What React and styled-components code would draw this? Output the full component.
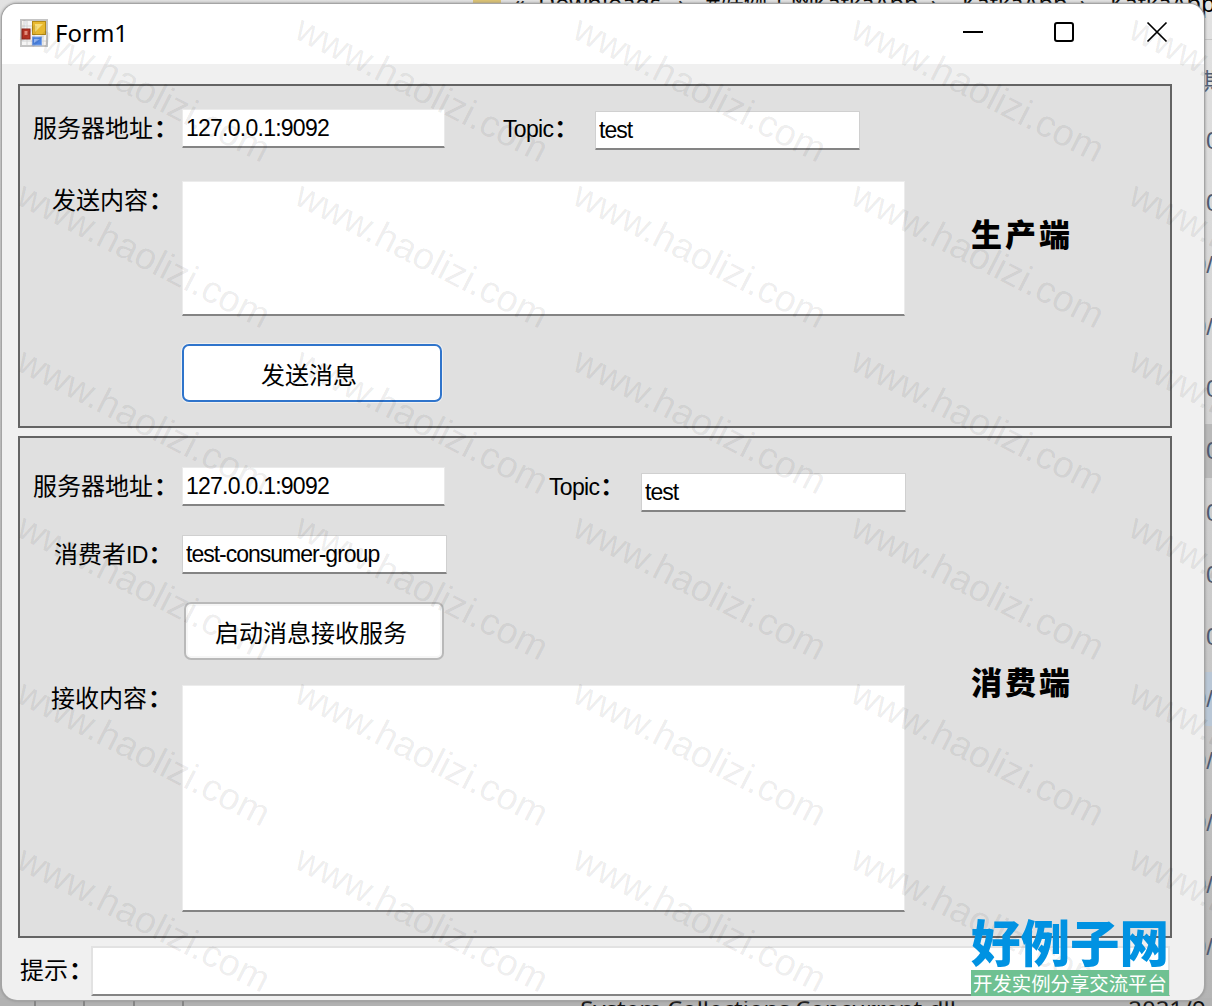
import React, { useState } from 'react';
import styled, { createGlobalStyle } from 'styled-components';

const GlobalStyle = createGlobalStyle`
  * {
    box-sizing: border-box;
  }

  body {
    margin: 0;
    font-family: "Liberation Sans", "Noto Sans CJK SC", sans-serif;
    color: #000;
  }
`;

const Desktop = styled.div`
  position: relative;
  width: 1212px;
  height: 1006px;
  padding: 4px 8px 6px 2px;
  overflow: hidden;
  background: linear-gradient(#e2e2e2, #cbcbcb 60%, #b4b4b4);
`;

/* explorer window that peeks out behind the form */
const Explorer = styled.div`
  position: absolute;
  inset: 0;
  display: flex;
  flex-direction: column;
  justify-content: space-between;
`;

const PathBar = styled.div`
  display: flex;
  height: 40px;
  padding-left: 473px;
  border-bottom: 1px solid #c4c4c4;
  font-family: "Noto Sans", "Noto Sans CJK SC", sans-serif;
  font-size: 23.5px;
  line-height: 30px;
  white-space: pre;
`;

const Folder = styled.span`
  width: 28px;
  height: 5px;
  flex: none;
  margin-right: 12px;
  background: #dcc271;
`;

const PathText = styled.span`
  width: ${({ width }) => width}px;
  flex: none;
  margin-top: -12px;
`;

const Dates = styled.div`
  position: absolute;
  top: 52px;
  right: 0;
  width: 9px;
  overflow: hidden;
  color: #4e5a70;
  font-size: 24px;
`;

const DateRow = styled.div`
  display: flex;
  align-items: center;
  height: 54px;
  margin-bottom: 8px;
  padding-left: 3px;
  background: ${({ fill }) => fill || 'transparent'};
  text-indent: ${({ shift }) => shift || 0}px;
`;

const FileRow = styled.div`
  display: flex;
  height: 8px;
  padding-left: 34px;
  background: #b2b2b2;
  color: #111;
  font-family: "Noto Sans", sans-serif;
  font-size: 24px;
  line-height: 22px;
  white-space: pre;
`;

const Guide = styled.span`
  width: 49.3px;
  border-left: 2px solid #858585;
`;

const FileName = styled.span`
  width: 548px;
  margin-left: 349px;
`;

const Window = styled.main`
  position: relative;
  display: flex;
  flex-direction: column;
  width: 1202px;
  height: 996px;
  overflow: hidden;
  background: #f0f0f0;
  border-radius: 15px;
  box-shadow: 0 0 0 1px #a5a5a5, 0 0 3px 1px #8c8c8c;
`;

const TitleBar = styled.header`
  display: flex;
  align-items: center;
  height: 60px;
  flex: none;
  padding: 0 36px 3px 18px;
  background: #fff;
`;

const Title = styled.h1`
  flex: 1;
  margin: 0 0 0 7px;
  font-family: "Noto Sans", sans-serif;
  font-size: 24px;
  font-weight: 400;
  line-height: 30px;
`;

const Controls = styled.div`
  display: flex;
  gap: 71px;
`;

const Panel = styled.section`
  display: flex;
  height: ${({ height }) => height}px;
  flex: none;
  margin: ${({ gap }) => gap}px 32px 0 16px;
  background: #e0e0e0;
  border: 2px solid #646464;
`;

const Fields = styled.div`
  width: 951px;
  flex: none;
`;

const Row = styled.div`
  display: flex;
  align-items: flex-start;
  margin-top: ${({ gap }) => gap}px;
`;

const Label = styled.label`
  width: ${({ width }) => width}px;
  flex: none;
  padding-left: ${({ indent }) => indent || 0}px;
  margin-top: ${({ drop = 2 }) => drop}px;
  font-size: 24px;
  line-height: 36px;
  white-space: nowrap;
`;

const Colon = styled.span`
  margin-left: 1px;
  font-weight: 700;
`;

const Latin = styled.span`
  letter-spacing: -0.7px;
  font-size: 23px;
`;

const TextInput = styled.input`
  width: ${({ $wide }) => ($wide ? 265 : 263)}px;
  height: 39px;
  flex: none;
  margin: ${({ $drop }) => $drop || 0}px 0 0;
  padding: 1px 0 0 3px;
  background: #fff;
  border: 1px solid ${({ $wide }) => ($wide ? '#d0d0d0' : '#eaeaea')};
  border-bottom: 2px solid #848484;
  border-radius: 1px;
  font-family: "Liberation Sans", sans-serif;
  font-size: 23px;
  letter-spacing: ${({ $tight }) => $tight || -1}px;
  outline: none;
`;

const TextArea = styled.textarea`
  display: block;
  width: 723px;
  height: ${({ $height }) => $height}px;
  flex: none;
  margin: 0;
  padding: 4px;
  background: #fff;
  border: 1px solid #ececec;
  border-bottom: 2px solid #848484;
  font-size: 24px;
  resize: none;
  outline: none;
`;

const Button = styled.button`
  width: 260px;
  height: 58px;
  margin: 0 0 0 ${({ $indent }) => $indent}px;
  padding: 0 6px 0 0;
  background: #fff;
  border: 2px solid ${({ $primary }) => ($primary ? '#2f74cb' : '#b9b9b9')};
  border-radius: 7px;
  box-shadow: ${({ $primary }) => ($primary ? '0 0 0 1px #f0f0f0' : 'inset 0 0 0 2px #f6f6f6')};
  color: #000;
  font-family: "Noto Sans CJK SC", sans-serif;
  font-size: 24px;
`;

const Role = styled.h2`
  margin: ${({ top }) => top}px 0 0;
  font-family: "Noto Sans CJK SC", sans-serif;
  font-size: 31px;
  font-weight: 900;
  line-height: 40px;
  letter-spacing: 3px;
  white-space: nowrap;
`;

const Hint = styled.footer`
  display: flex;
  margin: 8px 34px 0 18px;
`;

const HintBox = styled.output`
  flex: 1;
  height: 50px;
  background: #fff;
  border: 2px solid #e2e2e2;
  border-bottom-color: #848484;
`;

const Watermark = styled.div`
  position: absolute;
  top: 17px;
  left: 15px;
  display: grid;
  grid-template-columns: repeat(5, 278px);
  grid-auto-rows: 166px;
  pointer-events: none;
`;

const Mark = styled.span`
  width: 0;
  height: 0;
  color: rgba(0, 0, 0, 0.08);
  font-size: 37.6px;
  line-height: 34px;
  white-space: nowrap;
  transform: translate(13px, -6.5px) rotate(27deg);
  transform-origin: 0 0;
`;

const Brand = styled.div`
  position: absolute;
  left: 971px;
  top: 916px;
  width: 198px;
  font-family: "Noto Sans CJK SC", sans-serif;
  white-space: nowrap;
`;

const BrandName = styled.div`
  height: 54px;
  color: #0092e2;
  font-size: 49.5px;
  font-weight: 900;
  line-height: 50px;
`;

const BrandSlogan = styled.div`
  height: 26px;
  padding-left: 2px;
  background: #6fc192;
  color: #fff;
  font-size: 19.4px;
  line-height: 25px;
`;

const dates = [
  { text: '期', shift: -3 },
  { text: '0' },
  { text: '0' },
  { text: '0/', shift: -13 },
  { text: '0/', shift: -13 },
  { text: '0' },
  { text: '0', fill: '#b9b9b9' },
  { text: '0' },
  { text: '0' },
  { text: '0' },
  { text: '0/', shift: -13, fill: '#b9c7d6' },
  { text: '0/', shift: -13 },
  { text: '0/', shift: -13 },
  { text: '0/', shift: -13 },
  { text: '0/', shift: -13 },
];

function FormIcon() {
  return (
    <svg width="28" height="28" viewBox="0 0 28 28">
      <rect x="1" y="1" width="26" height="26" fill="#f5f5f5" stroke="#c5c5c5" strokeWidth="2" />
      <path d="M7 2v24M2 7h10M2 22h24M23 17v9" stroke="#d4d4d4" />
      <rect x="2" y="10" width="8" height="10" fill="#b93424" stroke="#8d2418" />
      <rect x="4.500" y="12" width="3" height="4" fill="#e38d7b" />
      <rect x="12.500" y="2.500" width="13" height="13" fill="#e8b930" stroke="#b48a18" />
      <path d="M15 5h8l-8 8z" fill="#f8dd78" />
      <rect x="12.500" y="18" width="9" height="8" fill="#4b83e0" stroke="#7da4e8" />
      <path d="M14 20h6l-6 4z" fill="#8fb4f3" />
    </svg>
  );
}

function ControlIcon({ path }) {
  return (
    <svg width="22" height="22" viewBox="0 0 22 22" fill="none" stroke="#000" strokeWidth="2" overflow="visible">
      {path}
    </svg>
  );
}

function App() {
  const [producer, setProducer] = useState({ server: '127.0.0.1:9092', topic: 'test', content: '' });
  const [consumer, setConsumer] = useState({ server: '127.0.0.1:9092', topic: 'test', group: 'test-consumer-group' });

  function changeProducer(e) {
    setProducer({ ...producer, [e.target.name]: e.target.value });
  }

  function changeConsumer(e) {
    setConsumer({ ...consumer, [e.target.name]: e.target.value });
  }

  return (
    <Desktop>
      <GlobalStyle />
      <Explorer>
        <PathBar>
          <Folder />
          <PathText width={25}>«</PathText>
          <PathText width={140}>Downloads</PathText>
          <PathText width={27}>›</PathText>
          <PathText width={108}>#好例子网</PathText>
          <PathText width={149}>KafkaApp  ›</PathText>
          <PathText width={148}>KafkaApp  ›</PathText>
          <PathText width={120}>KafkaApp</PathText>
        </PathBar>
        <Dates>
          {dates.map((row, i) => (
            <DateRow key={i} shift={row.shift} fill={row.fill}>{row.text}</DateRow>
          ))}
        </Dates>
        <FileRow>
          <Guide />
          <Guide />
          <Guide />
          <Guide />
          <FileName>System.Collections.Concurrent.dll</FileName>
          <span>2021/9</span>
        </FileRow>
      </Explorer>

      <Window>
        <TitleBar>
          <FormIcon />
          <Title>Form1</Title>
          <Controls>
            <ControlIcon path={<path d="M3 10h20" />} />
            <ControlIcon path={<rect x="2" y="1" width="18" height="18" rx="2" />} />
            <ControlIcon path={<path d="M1.500 0.500l19 19M20.500 0.500l-19 19" strokeWidth="1.700" />} />
          </Controls>
        </TitleBar>

        <Panel height={344} gap={20}>
          <Fields>
            <Row gap={23}>
              <Label width={162} indent={13}>服务器地址<Colon>：</Colon></Label>
              <TextInput name="server" value={producer.server} onChange={changeProducer} $tight={-0.75} />
              <Label width={150} indent={58}><Latin>Topic</Latin><Colon>：</Colon></Label>
              <TextInput name="topic" value={producer.topic} onChange={changeProducer} $wide $drop={2} />
            </Row>
            <Row gap={31}>
              <Label width={162} indent={32}>发送内容<Colon>：</Colon></Label>
              <TextArea name="content" value={producer.content} onChange={changeProducer} $height={135} />
            </Row>
            <Row gap={28}>
              <Button $indent={162} $primary>发送消息</Button>
            </Row>
          </Fields>
          <Role top={127}>生产端</Role>
        </Panel>

        <Panel height={502} gap={8}>
          <Fields>
            <Row gap={29}>
              <Label width={162} indent={13}>服务器地址<Colon>：</Colon></Label>
              <TextInput name="server" value={consumer.server} onChange={changeConsumer} $tight={-0.75} />
              <Label width={196} indent={104}><Latin>Topic</Latin><Colon>：</Colon></Label>
              <TextInput name="topic" value={consumer.topic} onChange={changeConsumer} $wide $drop={6} />
            </Row>
            <Row gap={23}>
              <Label width={162} indent={34}>消费者<Latin>ID</Latin><Colon>：</Colon></Label>
              <TextInput name="group" value={consumer.group} onChange={changeConsumer} $wide />
            </Row>
            <Row gap={28}>
              <Button $indent={164}>启动消息接收服务</Button>
            </Row>
            <Row gap={25}>
              <Label width={162} indent={31} drop={-4}>接收内容<Colon>：</Colon></Label>
              <TextArea readOnly $height={227} />
            </Row>
          </Fields>
          <Role top={223}>消费端</Role>
        </Panel>

        <Hint>
          <Label width={71} drop={7}>提示<Colon>：</Colon></Label>
          <HintBox />
        </Hint>
      </Window>

      <Watermark>
        {Array.from({ length: 30 }, (_, i) => (
          <Mark key={i}>www.haolizi.com</Mark>
        ))}
      </Watermark>

      <Brand>
        <BrandName>好例子网</BrandName>
        <BrandSlogan>开发实例分享交流平台</BrandSlogan>
      </Brand>
    </Desktop>
  );
}

export default App;
